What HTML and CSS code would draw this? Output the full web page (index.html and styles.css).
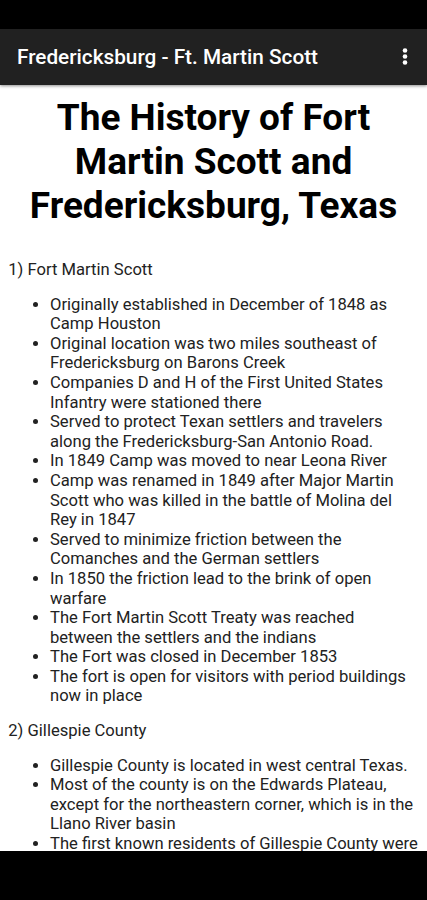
FILE: index.html
```html
<!DOCTYPE html>
<html lang="en">
<head>
<meta charset="utf-8">
<meta name="viewport" content="width=device-width, initial-scale=1">
<title>Fredericksburg - Ft. Martin Scott</title>
<link rel="stylesheet" href="styles.css">
</head>
<body>
<div class="status-bar"></div>
<header class="app-bar">
  <div class="app-title">Fredericksburg - Ft. Martin Scott</div>
  <button class="menu-btn" aria-label="More options">
    <svg width="6" height="18" viewBox="0 0 6 18"><circle cx="3" cy="2.5" r="2.3" fill="#fff"/><circle cx="3" cy="8.5" r="2.3" fill="#fff"/><circle cx="3" cy="14.5" r="2.3" fill="#fff"/></svg>
  </button>
</header>
<main class="content">
  <h1 class="page-title">The History of Fort Martin Scott and Fredericksburg, Texas</h1>
  <p class="section">1) Fort Martin Scott</p>
  <ul class="facts">
    <li>Originally established in December of 1848 as Camp Houston</li>
    <li>Original location was two miles southeast of Fredericksburg on Barons Creek</li>
    <li>Companies D and H of the First United States Infantry were stationed there</li>
    <li>Served to protect Texan settlers and travelers along the Fredericksburg-San Antonio Road.</li>
    <li>In 1849 Camp was moved to near Leona River</li>
    <li>Camp was renamed in 1849 after Major Martin Scott who was killed in the battle of Molina del Rey in 1847</li>
    <li>Served to minimize friction between the Comanches and the German settlers</li>
    <li>In 1850 the friction lead to the brink of open warfare</li>
    <li>The Fort Martin Scott Treaty was reached between the settlers and the indians</li>
    <li>The Fort was closed in December 1853</li>
    <li>The fort is open for visitors with period buildings now in place</li>
  </ul>
  <p class="section">2) Gillespie County</p>
  <ul class="facts">
    <li>Gillespie County is located in west central Texas.</li>
    <li>Most of the county is on the Edwards Plateau, except for the northeastern corner, which is in the Llano River basin</li>
    <li>The first known residents of Gillespie County were</li>
  </ul>
</main>
<div class="nav-bar"></div>
</body>
</html>
```
FILE: styles.css
```css
html, body {
  margin: 0;
  padding: 0;
  background: #fff;
  overflow: hidden;
  height: 900px;
}
body {
  font-family: Roboto, "Noto Sans", sans-serif;
  color: #222;
}
.status-bar {
  height: 29px;
  background: #000;
}
.app-bar {
  position: relative;
  z-index: 2;
  height: 56px;
  background: #212121;
  display: flex;
  align-items: center;
  justify-content: space-between;
  padding: 0 19px 0 17px;
  box-shadow: 0 1px 3px rgba(0,0,0,0.45);
}
.app-title {
  color: #fff;
  font-weight: 500;
  font-size: 20.75px;
  white-space: nowrap;
}
.menu-btn {
  background: none;
  border: 0;
  padding: 0;
  display: flex;
  align-items: center;
}
.content {
  padding: 10.5px 8.3px 0;
  font-size: 16.6px;
  line-height: 19.6px;
}
.page-title {
  margin: 0 0 32.5px;
  text-align: center;
  font-size: 37px;
  line-height: 44px;
  font-weight: 700;
  color: #000;
}
.section {
  margin: 0;
}
.facts {
  margin: 15px 0;
  padding-left: 41.7px;
}
.nav-bar {
  position: fixed;
  left: 0;
  right: 0;
  bottom: 0;
  height: 49px;
  background: #000;
  z-index: 3;
}
```
